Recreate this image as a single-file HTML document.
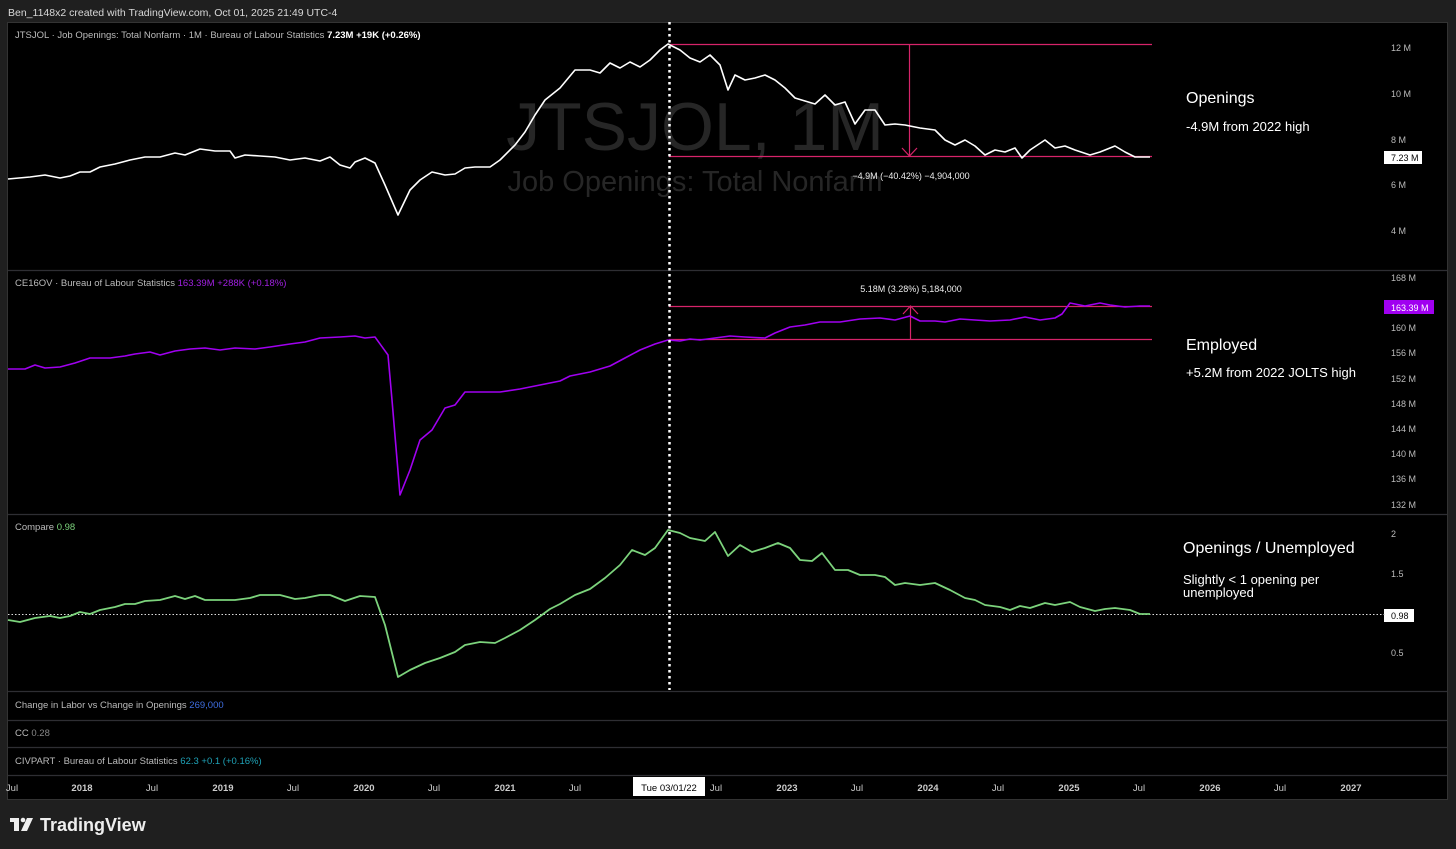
<!DOCTYPE html>
<html><head><meta charset="utf-8"><style>
html,body{margin:0;padding:0;background:#1f1f1f;width:1456px;height:849px;overflow:hidden;font-family:"Liberation Sans",sans-serif}
svg{position:absolute;left:0;top:0}
</style></head><body>
<svg width="1456" height="849" viewBox="0 0 1456 849" font-family="Liberation Sans, sans-serif">
<rect x="0" y="0" width="1456" height="849" fill="#1f1f1f"/>
<text x="8" y="16" font-size="10.5" fill="#d8d8d8">Ben_1148x2 created with TradingView.com, Oct 01, 2025 21:49 UTC-4</text>
<rect x="7.5" y="22.5" width="1440" height="777" fill="#000" stroke="#333" stroke-width="1"/>
<g stroke="#2e2e33" stroke-width="1.2">
<line x1="8" y1="270.5" x2="1447" y2="270.5"/>
<line x1="8" y1="514.5" x2="1447" y2="514.5"/>
<line x1="8" y1="691.5" x2="1447" y2="691.5"/>
<line x1="8" y1="720.5" x2="1447" y2="720.5"/>
<line x1="8" y1="747.5" x2="1447" y2="747.5"/>
<line x1="8" y1="775.5" x2="1447" y2="775.5"/>
</g>
<!-- watermark -->
<text x="695" y="150" font-size="68" fill="#262626" text-anchor="middle">JTSJOL, 1M</text>
<text x="695" y="191" font-size="29" fill="#262626" text-anchor="middle">Job Openings: Total Nonfarm</text>
<!-- legends -->
<text x="15" y="38" font-size="9.5" fill="#bbb">JTSJOL · Job Openings: Total Nonfarm · 1M · Bureau of Labour Statistics <tspan fill="#fff" font-weight="bold">7.23M  +19K (+0.26%)</tspan></text>
<text x="15" y="286" font-size="9.5" fill="#bbb">CE16OV · Bureau of Labour Statistics <tspan fill="#a020e0">163.39M  +288K (+0.18%)</tspan></text>
<text x="15" y="530" font-size="9.5" fill="#bbb">Compare <tspan fill="#7cd37c">0.98</tspan></text>
<text x="15" y="708" font-size="9.5" fill="#bbb">Change in Labor vs Change in Openings <tspan fill="#3e6de0">269,000</tspan></text>
<text x="15" y="736" font-size="9.5" fill="#bbb">CC <tspan fill="#888">0.28</tspan></text>
<text x="15" y="764" font-size="9.5" fill="#bbb">CIVPART · Bureau of Labour Statistics <tspan fill="#1fa3b8">62.3  +0.1 (+0.16%)</tspan></text>
<!-- price axis labels -->
<g font-size="9" fill="#bbb">
<text x="1391" y="51">12 M</text><text x="1391" y="97">10 M</text><text x="1391" y="143">8 M</text><text x="1391" y="188">6 M</text><text x="1391" y="234">4 M</text>
<text x="1391" y="281">168 M</text><text x="1391" y="331">160 M</text><text x="1391" y="356">156 M</text><text x="1391" y="382">152 M</text><text x="1391" y="407">148 M</text><text x="1391" y="432">144 M</text><text x="1391" y="457">140 M</text><text x="1391" y="482">136 M</text><text x="1391" y="508">132 M</text>
<text x="1391" y="537">2</text><text x="1391" y="577">1.5</text><text x="1391" y="656">0.5</text>
</g>
<rect x="1384" y="151" width="38" height="13" fill="#fff"/><text x="1391" y="161" font-size="9" fill="#000">7.23 M</text>
<rect x="1384" y="300" width="50" height="14" fill="#a000f0"/><text x="1391" y="311" font-size="9" fill="#fff">163.39 M</text>
<rect x="1384" y="609" width="30" height="13" fill="#fff"/><text x="1391" y="619" font-size="9" fill="#000">0.98</text>
<!-- time axis -->
<g font-size="9.5" fill="#ccc" text-anchor="middle">
<text x="12" y="791">Jul</text>
<text x="82" y="791" font-weight="bold">2018</text><text x="152" y="791">Jul</text>
<text x="223" y="791" font-weight="bold">2019</text><text x="293" y="791">Jul</text>
<text x="364" y="791" font-weight="bold">2020</text><text x="434" y="791">Jul</text>
<text x="505" y="791" font-weight="bold">2021</text><text x="575" y="791">Jul</text>
<text x="716" y="791">Jul</text>
<text x="787" y="791" font-weight="bold">2023</text><text x="857" y="791">Jul</text>
<text x="928" y="791" font-weight="bold">2024</text><text x="998" y="791">Jul</text>
<text x="1069" y="791" font-weight="bold">2025</text><text x="1139" y="791">Jul</text>
<text x="1210" y="791" font-weight="bold">2026</text><text x="1280" y="791">Jul</text>
<text x="1351" y="791" font-weight="bold">2027</text>
</g>
<rect x="633" y="777" width="72" height="19" fill="#fff"/>
<text x="669" y="791" font-size="9.5" fill="#000" text-anchor="middle">Tue 03/01/22</text>
<!-- pink measure boxes -->
<g stroke="#d6246a" stroke-width="1.2" fill="none">
<line x1="669" y1="44.5" x2="1152" y2="44.5"/><line x1="669" y1="156.5" x2="1152" y2="156.5"/>
<line x1="909.5" y1="44" x2="909.5" y2="156"/><polyline points="902,148 909.5,156 917,148"/>
<line x1="669" y1="306.5" x2="1152" y2="306.5"/><line x1="669" y1="339.5" x2="1152" y2="339.5"/>
<line x1="910.5" y1="306" x2="910.5" y2="339"/><polyline points="903,314 910.5,306 918,314"/>
</g>
<text x="911" y="179" font-size="9" fill="#eee" text-anchor="middle">−4.9M (−40.42%) −4,904,000</text>
<text x="911" y="292" font-size="9" fill="#eee" text-anchor="middle">5.18M (3.28%) 5,184,000</text>
<!-- lines -->
<polyline fill="none" stroke="#fff" stroke-width="1.6" stroke-linejoin="round" points="8,179 30,177 45,175 60,178 70,176 80,172 90,172 100,167 115,164 130,160 145,157 160,157 175,153 185,155 200,149 215,151 230,151 235,158 245,155 260,156 275,157 290,160 305,158 320,161 330,157 340,165 350,168 355,162 365,158 375,163 385,185 398,215 410,190 420,180 432,172 445,175 455,174 465,168 475,167 490,167 500,160 515,145 525,132 535,115 545,100 560,88 575,70 590,70 600,73 610,63 620,68 630,62 640,67 650,60 660,50 668,44 680,50 690,58 700,62 710,55 720,65 728,90 735,75 745,80 755,78 765,75 775,80 785,88 795,98 805,101 815,104 825,95 835,105 845,102 855,124 865,110 875,110 885,125 895,124 905,125 920,128 935,130 945,140 955,145 965,140 975,146 985,155 995,150 1005,152 1015,148 1022,158 1030,150 1045,140 1055,148 1065,146 1075,150 1090,155 1100,152 1115,146 1125,152 1135,157 1150,157"/>
<polyline fill="none" stroke="#a000f0" stroke-width="1.6" stroke-linejoin="round" points="8,369 25,369 35,365 45,368 60,367 75,363 90,358 110,358 125,356 135,354 150,352 160,355 175,351 190,349 205,348 220,350 235,348 255,349 270,347 290,344 305,342 320,338 340,337 355,336 365,338 375,337 388,355 392,400 400,495 410,470 420,440 432,430 445,408 455,405 465,392 480,392 500,392 520,389 540,385 560,381 570,376 590,372 610,366 625,358 640,350 655,344 668,340 680,341 690,339 700,340 715,338 730,336 745,337 765,338 775,333 790,327 805,325 820,322 840,322 860,319 880,318 895,320 910,316 920,321 935,321 945,322 960,319 975,320 990,321 1010,320 1025,317 1040,320 1055,318 1062,314 1070,303 1085,306 1100,303 1110,305 1125,307 1140,306 1150,306"/>
<line x1="8" y1="614.5" x2="1385" y2="614.5" stroke="#ddd" stroke-width="1" stroke-dasharray="1.5,2"/>
<polyline fill="none" stroke="#7cd37c" stroke-width="1.8" stroke-linejoin="round" points="8,620 20,622 35,618 50,616 60,618 70,616 80,612 90,614 100,610 115,607 125,604 135,604 145,601 160,600 175,596 185,599 195,596 205,600 220,600 235,600 250,598 260,595 280,595 295,599 305,598 320,595 330,595 345,601 360,596 375,597 385,625 398,677 410,670 425,663 440,658 455,652 465,645 480,642 495,643 505,638 520,630 535,620 550,609 560,604 575,595 590,589 605,578 620,565 632,550 645,555 655,548 668,530 680,533 690,538 705,541 715,532 728,556 740,545 752,552 765,548 778,543 790,548 800,560 812,561 822,553 835,570 848,570 860,575 875,575 885,577 895,585 905,583 920,585 935,583 950,590 965,598 975,600 985,605 1000,607 1010,610 1020,606 1030,608 1045,603 1055,605 1070,602 1080,607 1095,611 1105,609 1115,608 1130,610 1140,614 1150,614"/>
<line x1="669.5" y1="22" x2="669.5" y2="690" stroke="#fff" stroke-width="2.5" stroke-dasharray="2.5,3.5"/>
<!-- annotations -->
<g fill="#fff">
<text x="1186" y="103" font-size="16">Openings</text>
<text x="1186" y="131" font-size="13">-4.9M from 2022 high</text>
<text x="1186" y="350" font-size="16">Employed</text>
<text x="1186" y="377" font-size="13">+5.2M from 2022 JOLTS high</text>
<text x="1183" y="553" font-size="16">Openings / Unemployed</text>
<text x="1183" y="584" font-size="13">Slightly &lt; 1 opening per</text>
<text x="1183" y="597" font-size="13">unemployed</text>
</g>
<!-- logo -->
<g fill="#eee">
<rect x="10" y="818" width="9" height="4"/><rect x="14" y="818" width="5" height="13"/>
<circle cx="23" cy="820" r="2.3"/><polygon points="27,818 33,818 27,831 21,831"/>
</g>
<text x="40" y="831" font-size="18" font-weight="bold" fill="#eee">TradingView</text>
</svg>
</body></html>
